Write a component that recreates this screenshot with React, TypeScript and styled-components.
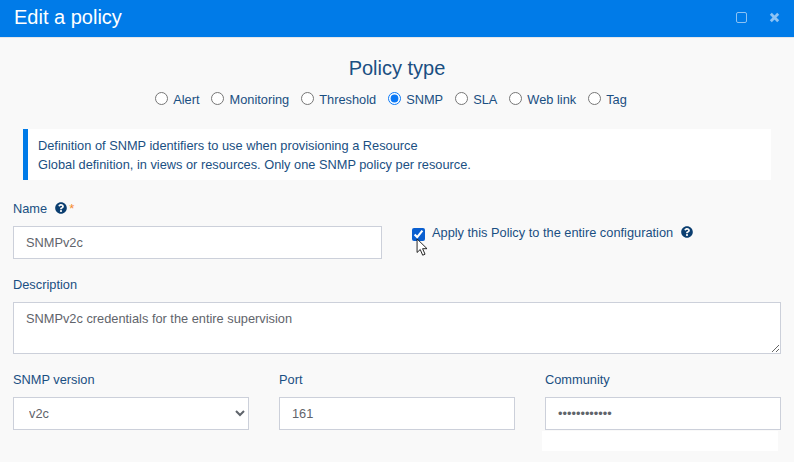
import React from 'react';
import styled, { createGlobalStyle } from 'styled-components';

const GlobalStyle = createGlobalStyle`
  html, body {
    margin: 0;
    padding: 0;
    height: 462px;
    overflow: hidden;
    background: #f9f9f9;
    font-family: "Liberation Sans", Arial, sans-serif;
  }
  * { box-sizing: border-box; }
`;

const Dialog = styled.div`
  width: 794px;
  height: 462px;
  background: #f9f9f9;
  color: #1a4f82;
  overflow: hidden;
`;

const Header = styled.header`
  height: 38px;
  padding: 0 14px 2px 14px;
  display: flex;
  align-items: center;
  justify-content: space-between;
  background: #007be8;
  border-bottom: 1px solid #e4e6ea;
`;

const Title = styled.h1`
  margin: 0;
  font-size: 20px;
  font-weight: 400;
  color: #fff;
`;

const WindowActions = styled.div`
  display: flex;
  align-items: center;
  gap: 22px;
  color: #8cc2f4;
`;

const Body = styled.div`
  padding: 18px 13px 0;
`;

const Heading = styled.h2`
  margin: 0;
  font-size: 20px;
  line-height: 24px;
  font-weight: 400;
  text-align: center;
`;

const RadioRow = styled.div`
  margin-top: 11px;
  display: flex;
  justify-content: center;
  gap: 12px;
  height: 17px;
  padding-right: 12px;
`;

const RadioLabel = styled.label`
  display: flex;
  align-items: center;
  gap: 5px;
  font-size: 12.8px;
`;

const Radio = styled.input.attrs({ type: 'radio' })`
  margin: 0 0 2px;
  width: 13px;
  height: 13px;
  accent-color: #0a78f5;
`;

const Notice = styled.div`
  margin: 21px 10px 0;
  height: 51px;
  padding: 7px 10px;
  background: #fff;
  border-left: 5px solid #007be8;
  font-size: 12.8px;
  line-height: 19px;
`;

const TopRow = styled.div`
  margin-top: 21px;
  display: grid;
  grid-template-columns: 369px 1fr;
  column-gap: 30px;
`;

const Field = styled.div`
  display: flex;
  flex-direction: column;
  position: relative;
`;

const FieldLabel = styled.label`
  height: 25px;
  display: flex;
  align-items: flex-start;
  font-size: 12.8px;
  line-height: 15px;
`;

const HelpIcon = styled.svg`
  width: 12px;
  height: 12px;
  margin-left: 8px;
  margin-top: 1px;
  fill: #0b3e70;
  flex: none;
`;

const Required = styled.span`
  margin-left: 2px;
  color: #f58a2e;
  font-size: 13px;
`;

const TextInput = styled.input`
  width: 100%;
  height: 33px;
  padding: 0 12px;
  background: #fff;
  border: 1px solid #ccd0da;
  border-radius: 0;
  outline: none;
  color: #5f646b;
  font: 12.8px "Liberation Sans", Arial, sans-serif;
`;

const CheckField = styled.div`
  position: relative;
  padding-top: 24px;
  display: flex;
  align-items: flex-start;
  gap: 7px;
  font-size: 12.8px;
  line-height: 15px;
`;

const Checkbox = styled.input.attrs({ type: 'checkbox' })`
  margin: 3px 0 0;
  width: 13px;
  height: 13px;
  accent-color: #0a5fd0;
`;

const CheckText = styled.label`
  display: flex;
  align-items: flex-start;
`;

const Cursor = styled.svg`
  position: absolute;
  left: 4px;
  top: 37px;
  width: 13px;
  height: 19px;
`;

const DescriptionField = styled(Field)`
  margin-top: 18px;
`;

const TextArea = styled.textarea`
  width: 100%;
  height: 52px;
  padding: 9px 12px;
  display: block;
  background: #fff;
  border: 1px solid #ccd0da;
  border-radius: 0;
  outline: none;
  color: #5f646b;
  font: 12.8px/14px "Liberation Sans", Arial, sans-serif;
`;

const BottomRow = styled.div`
  margin-top: 18px;
  display: grid;
  grid-template-columns: repeat(3, 236px);
  column-gap: 30px;
`;

const Select = styled.select`
  width: 100%;
  height: 33px;
  padding: 0 11px;
  background: #fff;
  border: 1px solid #ccd0da;
  border-radius: 0;
  outline: none;
  color: #5f646b;
  font: 12.8px "Liberation Sans", Arial, sans-serif;
`;

const Suggestion = styled.div`
  position: absolute;
  left: -3px;
  top: 59px;
  width: 236px;
  height: 20px;
  background: #fff;
`;

const policyTypes = ['Alert', 'Monitoring', 'Threshold', 'SNMP', 'SLA', 'Web link', 'Tag'];

const Help = () => (
  <HelpIcon viewBox="0 0 512 512">
    <path d="M504 256c0 137-111 248-248 248S8 393 8 256 119 8 256 8s248 111 248 248zM262.700 90c-54.500 0-89.300 23-116.500 63.800-3.500 5.300-2.400 12.400 2.700 16.300l34.700 26.300c5.200 3.900 12.600 3 16.700-2.100 17.900-22.700 30.100-35.800 57.300-35.800 20.400 0 45.700 13.100 45.700 33 0 15-12.400 22.700-32.600 34-23.600 13.200-54.800 29.700-54.800 70.900V302c0 6.600 5.400 12 12 12h56c6.600 0 12-5.400 12-12v-1.300c0-28.600 83.500-29.800 83.500-107.100C380 135.400 319.600 90 262.700 90zM256 339c-25.500 0-46.200 20.700-46.200 46.200 0 25.500 20.700 46.200 46.200 46.200s46.200-20.700 46.200-46.200c0-25.500-20.700-46.200-46.200-46.200z" />
  </HelpIcon>
);

export default function App() {
  return (
    <Dialog>
      <GlobalStyle />
      <Header>
        <Title>Edit a policy</Title>
        <WindowActions>
          <svg width="11" height="11" viewBox="0 0 11 11" fill="none">
            <rect x="0.5" y="0.5" width="10" height="10" rx="1.5" stroke="currentColor" />
          </svg>
          <svg width="11" height="11" viewBox="0 0 11 11" fill="none">
            <path d="M1.800 1.800 9.200 9.200M9.200 1.800 1.800 9.200" stroke="currentColor" strokeWidth="2.800" />
          </svg>
        </WindowActions>
      </Header>
      <Body>
        <Heading>Policy type</Heading>
        <RadioRow>
          {policyTypes.map((type) => (
            <RadioLabel key={type}>
              <Radio name="policyType" defaultChecked={type === 'SNMP'} />
              {type}
            </RadioLabel>
          ))}
        </RadioRow>
        <Notice>
          Definition of SNMP identifiers to use when provisioning a Resource
          <br />
          Global definition, in views or resources. Only one SNMP policy per resource.
        </Notice>
        <TopRow>
          <Field>
            <FieldLabel>
              Name
              <Help />
              <Required>*</Required>
            </FieldLabel>
            <TextInput defaultValue="SNMPv2c" />
          </Field>
          <CheckField>
            <Checkbox defaultChecked />
            <CheckText>
              Apply this Policy to the entire configuration
              <Help />
            </CheckText>
            <Cursor viewBox="0 0 14 21">
              <path d="M1 1v15l3.500-3.300 2.700 6.300 2.600-1.100-2.700-6.100H12z" fill="#fff" stroke="#111" strokeWidth="1" />
            </Cursor>
          </CheckField>
        </TopRow>
        <DescriptionField>
          <FieldLabel>Description</FieldLabel>
          <TextArea defaultValue="SNMPv2c credentials for the entire supervision" />
        </DescriptionField>
        <BottomRow>
          <Field>
            <FieldLabel>SNMP version</FieldLabel>
            <Select defaultValue="v2c">
              <option value="v1">v1</option>
              <option value="v2c">v2c</option>
              <option value="v3">v3</option>
            </Select>
          </Field>
          <Field>
            <FieldLabel>Port</FieldLabel>
            <TextInput defaultValue="161" />
          </Field>
          <Field>
            <FieldLabel>Community</FieldLabel>
            <TextInput type="password" defaultValue="public-snmp1" />
            <Suggestion />
          </Field>
        </BottomRow>
      </Body>
    </Dialog>
  );
}
